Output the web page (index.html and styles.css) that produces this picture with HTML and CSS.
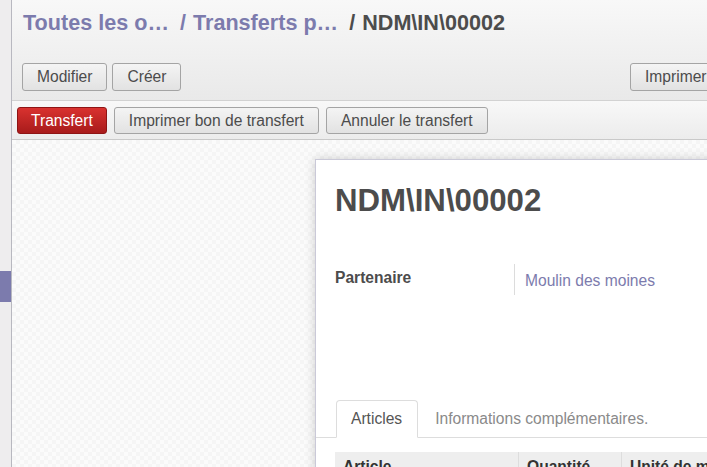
FILE: index.html
```html
<!DOCTYPE html>
<html lang="fr">
<head>
    <meta charset="UTF-8">
    <meta name="viewport" content="width=device-width, initial-scale=1.0">
    <title>NDM\IN\00002</title>
    <link rel="stylesheet" href="styles.css">
</head>
<body>

<div class="app-sidebar">
    <div class="menu-active"></div>
</div>

<div class="app-main">
    <div class="control-panel">
        <ol class="breadcrumb">
            <li class="crumb-link">Toutes les o…</li>
            <li class="crumb-link"><span class="crumb-sep">/</span>Transferts p…</li>
            <li class="crumb-current"><span class="crumb-sep">/</span>NDM\IN\00002</li>
        </ol>
        <div class="cp-buttons">
            <div class="cp-left">
                <button class="btn">Modifier</button>
                <button class="btn">Créer</button>
            </div>
            <div class="cp-right">
                <button class="btn">Imprimer ▾</button>
            </div>
        </div>
    </div>

    <div class="statusbar">
        <button class="btn btn-primary">Transfert</button>
        <button class="btn">Imprimer bon de transfert</button>
        <button class="btn">Annuler le transfert</button>
    </div>

    <div class="sheet-bg">
        <div class="sheet">
            <h1 class="sheet-title">NDM\IN\00002</h1>

            <div class="field-row">
                <div class="field-label">Partenaire</div>
                <div class="field-value">Moulin des moines</div>
            </div>

            <div class="notebook">
                <ul class="nav-tabs">
                    <li class="tab active">Articles</li>
                    <li class="tab">Informations complémentaires.</li>
                </ul>
                <table class="lines">
                    <thead>
                        <tr>
                            <th class="col-article">Article</th>
                            <th class="col-qty">Quantité</th>
                            <th>Unité de mesure</th>
                        </tr>
                    </thead>
                </table>
            </div>
        </div>
    </div>
</div>

</body>
</html>
```

FILE: styles.css
```css
body {
    font-family: 'Liberation Sans', Arial, sans-serif;
    font-size: 15.6px;
    color: #4c4c4c;
    margin: 0;
    padding: 0;
    display: flex;
    height: 467px;
    overflow: hidden;
    background: #fff;
}
.app-sidebar {
    flex: 0 0 11px;
    background-color: #eeedee;
    border-right: 1px solid #b8b8c0;
}
.menu-active {
    margin-top: 271px;
    height: 31px;
    background-color: #7c7bad;
}
.app-main {
    flex: 0 0 1000px;
    display: flex;
    flex-direction: column;
}
.control-panel {
    flex-shrink: 0;
    height: 101px;
    box-sizing: border-box;
    background: linear-gradient(to bottom, #f8f8f8, #e9e9e9);
    border-bottom: 1px solid #d2d2d2;
}
.breadcrumb {
    list-style: none;
    margin: 0;
    padding: 10px 0 0 11px;
    display: flex;
    font-size: 21.6px;
    font-weight: bold;
    line-height: 26px;
}
.crumb-link {
    color: #7c7bad;
}
.crumb-current {
    color: #4c4c4c;
}
.crumb-sep {
    color: #7c7bad;
    font-weight: bold;
    padding: 0 7px 0 11px;
}
.crumb-current .crumb-sep {
    color: #4c4c4c;
}
.cp-buttons {
    display: flex;
    margin-top: 27px;
    padding-left: 10px;
}
.cp-left {
    display: flex;
    gap: 5px;
    width: 608px;
}
.cp-right {
    display: flex;
    gap: 5px;
}
.btn {
    font-family: inherit;
    font-size: 15.6px;
    height: 28px;
    padding: 0 14px;
    color: #4c4c4c;
    background: linear-gradient(to bottom, #f4f4f4, #e2e2e2);
    border: 1px solid #a4a4a4;
    border-radius: 3px;
    white-space: nowrap;
}
.statusbar {
    flex-shrink: 0;
    height: 39px;
    display: flex;
    align-items: flex-start;
    gap: 7px;
    padding: 6px 0 0 5px;
    box-sizing: border-box;
    background: linear-gradient(to bottom, #f8f8f8, #ececec);
    border-bottom: 1px solid #c9c9c9;
}
.statusbar .btn {
    height: 27px;
    padding: 0 14px;
}
.statusbar .btn-primary {
    padding: 0 13px;
}
.btn-primary {
    color: #fff;
    background: linear-gradient(to bottom, #d9322f, #a81b1b);
    border-color: #8e1414;
}
.sheet-bg {
    flex: 1 0 auto;
    padding: 19px 0 0 303px;
    background-color: #f8f8f8;
    background-image: repeating-conic-gradient(#f5f5f5 0 25%, #fbfbfb 0 50%);
    background-size: 8px 8px;
}
.sheet {
    height: 100%;
    background: #fff;
    border: 1px solid #cac9d8;
    box-shadow: 0 0 10px rgba(0, 0, 0, 0.18);
    padding: 23px 19px 0 19px;
}
.sheet-title {
    margin: 0;
    font-size: 31.2px;
    line-height: 36px;
    font-weight: bold;
    color: #4c4c4c;
}
.field-row {
    display: flex;
    margin-top: 45px;
    height: 31px;
}
.field-label {
    width: 179px;
    font-weight: bold;
    padding-top: 5px;
}
.field-value {
    border-left: 1px solid #dcdcdc;
    padding: 8px 0 0 10px;
    color: #7c7bad;
}
.notebook {
    margin: 105px -19px 0 -19px;
}
.nav-tabs {
    list-style: none;
    margin: 0;
    padding: 0 0 0 20px;
    display: flex;
    border-bottom: 1px solid #dddddd;
    height: 37px;
}
.tab {
    padding: 0 15px 0 14px;
    line-height: 35px;
    color: #8a8a8a;
    border: 1px solid transparent;
    border-radius: 4px 4px 0 0;
    margin-right: 2px;
}
.tab.active {
    color: #555;
    background: #fff;
    border-color: #dddddd;
    border-bottom-color: #fff;
    box-sizing: border-box;
    margin-bottom: -1px;
    height: 38px;
}
.lines {
    margin: 14px 0 0 19px;
    border-collapse: collapse;
    width: 600px;
}
.lines th {
    background-color: #eeeeee;
    text-align: left;
    font-weight: bold;
    color: #333;
    padding: 6px 8px;
    border-left: 1px solid #dddddd;
}
.lines th:first-child {
    border-left: none;
}
.col-article {
    width: 167px;
}
.col-qty {
    width: 86px;
}
```
